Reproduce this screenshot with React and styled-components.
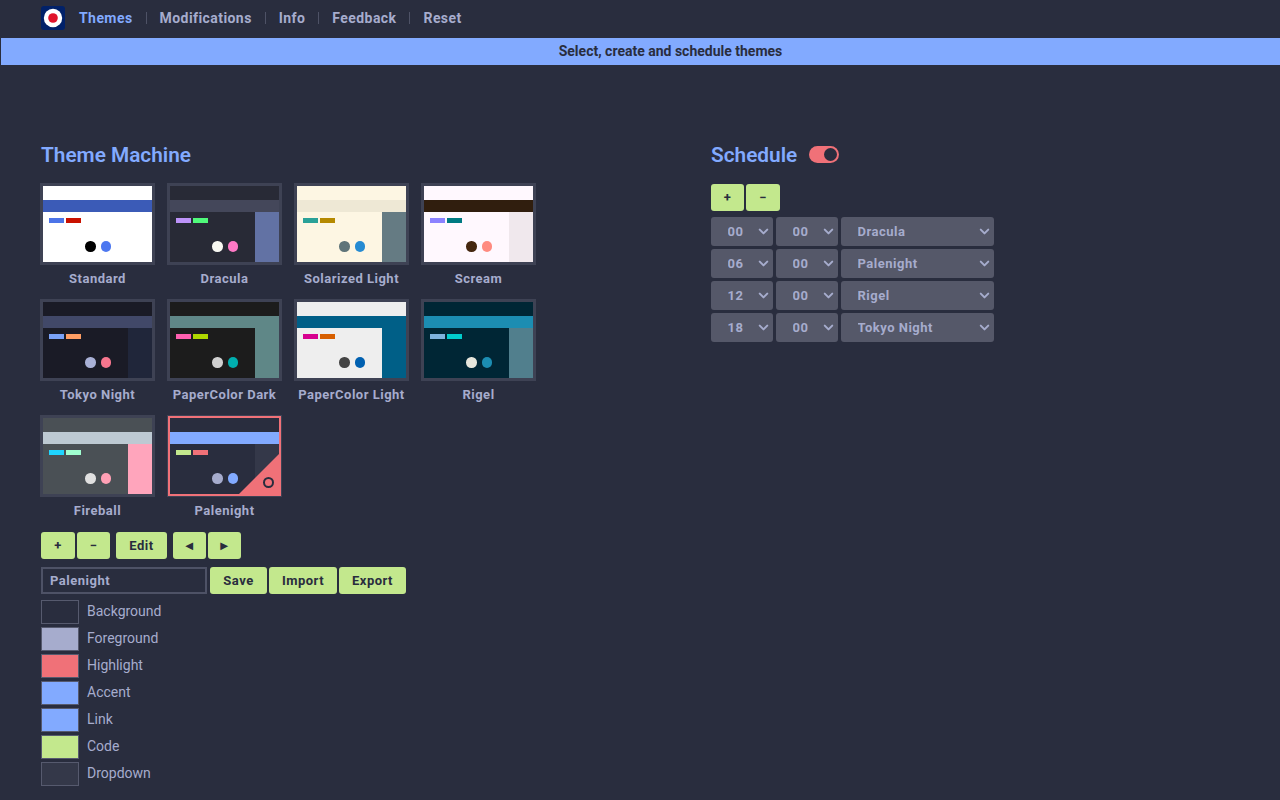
import React, { useState } from "react";
import styled, { createGlobalStyle } from "styled-components";
import { ChevronDown } from "lucide-react";

const bg = "#292d3e";
const fg = "#a6accd";
const accent = "#82aaff";
const highlight = "#f07178";
const code = "#c3e88d";
const border = "#3e4254";

const themes = [
  { name: "Standard", bg: "#ffffff", bar: "#3b5bb7", side: "#ffffff", chips: ["#4c74e8", "#c91100"], dots: ["#000000", "#4d78f0"] },
  { name: "Dracula", bg: "#282a36", bar: "#44475a", side: "#6272a4", chips: ["#bd93f9", "#50fa7b"], dots: ["#f8f8f2", "#ff79c6"] },
  { name: "Solarized Light", bg: "#fdf6e3", bar: "#eee8d5", side: "#657b83", chips: ["#2aa198", "#b58900"], dots: ["#5f7479", "#268bd2"] },
  { name: "Scream", bg: "#fff8fe", bar: "#301e0e", side: "#f0e8ed", chips: ["#8c82ff", "#007a82"], dots: ["#45270f", "#ff8b80"] },
  { name: "Tokyo Night", bg: "#1a1b26", bar: "#414868", side: "#20263a", chips: ["#7aa2f7", "#ff9e64"], dots: ["#a9b1d6", "#f7768e"] },
  { name: "PaperColor Dark", bg: "#1c1c1c", bar: "#5f8787", side: "#5f8787", chips: ["#ff5faf", "#afd700"], dots: ["#d0d0d0", "#00afaf"] },
  { name: "PaperColor Light", bg: "#eeeeee", bar: "#005f87", side: "#005f87", chips: ["#d7008f", "#d75f00"], dots: ["#444444", "#0060b0"] },
  { name: "Rigel", bg: "#002635", bar: "#1c8db2", side: "#517f8d", chips: ["#7eb2dd", "#00cccc"], dots: ["#e6e6dc", "#1c8db2"] },
  { name: "Fireball", bg: "#4a5055", bar: "#bdc9d2", side: "#ffa5bc", chips: ["#1fd5ff", "#a0ffd0"], dots: ["#e0e0e0", "#ffa0b5"] },
  { name: "Palenight", bg: bg, bar: accent, side: "#343849", chips: [code, "#f07178"], dots: [fg, accent] },
];

const colours = [
  ["Background", bg],
  ["Foreground", fg],
  ["Highlight", highlight],
  ["Accent", accent],
  ["Link", accent],
  ["Code", code],
  ["Dropdown", "#343849"],
];

const schedule = [
  ["00", "00", "Dracula"],
  ["06", "00", "Palenight"],
  ["12", "00", "Rigel"],
  ["18", "00", "Tokyo Night"],
];

const navItems = ["Themes", "Modifications", "Info", "Feedback", "Reset"];

const Dropdown = ({ value, options, wide }) => (
  <SelectWrap $wide={wide}>
    <Select defaultValue={value}>
      {options.map((o) => (
        <option key={o}>{o}</option>
      ))}
    </Select>
    <SelectArrow size={15} strokeWidth={3.2} />
  </SelectWrap>
);

const App = () => {
  const [active, setActive] = useState("Palenight");
  const [enabled, setEnabled] = useState(true);

  return (
    <Page>
      <GlobalStyle />
      <Nav>
        <svg width="24" height="24" viewBox="0 0 24 24">
          <rect width="24" height="24" rx="3" fill="#012169" />
          <circle cx="12" cy="12" r="9.2" fill="#ffffff" />
          <circle cx="12" cy="12" r="4.8" fill="#e0142c" />
        </svg>
        <NavList>
          {navItems.map((item) => (
            <NavItem key={item} $current={item === "Themes"}>
              {item}
            </NavItem>
          ))}
        </NavList>
      </Nav>
      <Banner>Select, create and schedule themes</Banner>

      <Columns>
        <section>
          <Title>Theme Machine</Title>
          <ThemeGrid>
            {themes.map((t) => (
              <ThemeCard key={t.name} onClick={() => setActive(t.name)}>
                <Preview $selected={active === t.name}>
                  <PreviewTop $color={t.bg} />
                  <PreviewBar $color={t.bar} />
                  <PreviewBody $color={t.bg}>
                    <PreviewMain>
                      <Chips>
                        {t.chips.map((c) => (
                          <Chip key={c} $color={c} />
                        ))}
                      </Chips>
                      <Dots>
                        {t.dots.map((c) => (
                          <Dot key={c} $color={c} />
                        ))}
                      </Dots>
                    </PreviewMain>
                    <PreviewSide $color={t.side} />
                  </PreviewBody>
                  {active === t.name && (
                    <Corner>
                      <CornerRing />
                    </Corner>
                  )}
                </Preview>
                <ThemeName>{t.name}</ThemeName>
              </ThemeCard>
            ))}
          </ThemeGrid>

          <ButtonRow>
            <Button $w={34}>+</Button>
            <Button $w={33}>−</Button>
            <Button $w={51} $gapLeft={4}>
              Edit
            </Button>
            <Button $w={33} $gapLeft={4}>
              ◄
            </Button>
            <Button $w={33}>►</Button>
          </ButtonRow>

          <SaveRow>
            <NameInput defaultValue="Palenight" />
            <Button $w={57} $gapLeft={1}>
              Save
            </Button>
            <Button $w={68}>Import</Button>
            <Button $w={67}>Export</Button>
          </SaveRow>

          <ColourList>
            {colours.map(([label, colour]) => (
              <ColourRow key={label}>
                <Swatch $color={colour} />
                <ColourLabel>{label}</ColourLabel>
              </ColourRow>
            ))}
          </ColourList>
        </section>

        <section>
          <ScheduleHead>
            <Title>Schedule</Title>
            <Toggle $on={enabled} onClick={() => setEnabled(!enabled)} />
          </ScheduleHead>
          <ScheduleButtons>
            <Button $w={33}>+</Button>
            <Button $w={34}>−</Button>
          </ScheduleButtons>
          <ScheduleList>
            {schedule.map(([h, m, name]) => (
              <ScheduleRow key={h}>
                <Dropdown value={h} options={[h]} />
                <Dropdown value={m} options={[m]} />
                <Dropdown value={name} options={themes.map((t) => t.name)} wide />
              </ScheduleRow>
            ))}
          </ScheduleList>
        </section>
      </Columns>
    </Page>
  );
};

export default App;

const GlobalStyle = createGlobalStyle`
  html, body {
    margin: 0;
    background: ${bg};
  }
  body {
    font-family: Roboto, sans-serif;
    color: ${fg};
  }
`;

const Page = styled.div`
  min-height: 800px;
  padding-left: 1px;
  box-sizing: border-box;
`;

const Nav = styled.nav`
  display: flex;
  align-items: center;
  height: 38px;
  padding: 0 0 2px 40px;
  box-sizing: border-box;
`;

const NavList = styled.ul`
  display: flex;
  list-style: none;
  margin: 0 0 0 14px;
  padding: 0;
`;

const NavItem = styled.li`
  font-size: 14px;
  font-weight: 700;
  letter-spacing: 0.43px;
  line-height: 12px;
  color: ${(p) => (p.$current ? accent : fg)};
  padding: 0 13px;
  border-left: 1px solid #4e5266;

  &:first-child {
    border-left: none;
    padding-left: 0;
  }
`;

const Banner = styled.div`
  height: 27px;
  line-height: 27px;
  padding-left: 60px;
  background: ${accent};
  color: ${bg};
  text-align: center;
  font-size: 14px;
  font-weight: 700;
`;

const Columns = styled.main`
  display: grid;
  grid-template-columns: 670px 1fr;
  padding: 76px 0 0 40px;
`;

const Title = styled.h2`
  margin: 0;
  font-size: 20.8px;
  line-height: 28px;
  font-weight: 600;
  color: ${accent};
`;

const ThemeGrid = styled.div`
  display: grid;
  grid-template-columns: repeat(4, 115px);
  column-gap: 12px;
  row-gap: 10px;
  margin: 14px 0 0 -1px;
`;

const ThemeCard = styled.div`
  cursor: pointer;
`;

const Preview = styled.div`
  position: relative;
  display: flex;
  flex-direction: column;
  height: 82px;
  box-sizing: border-box;
  border: 3px solid ${(p) => (p.$selected ? highlight : border)};
  outline: 1px solid ${border};
  outline-offset: -1px;
  overflow: hidden;
`;

const PreviewTop = styled.div`
  height: 14px;
  background: ${(p) => p.$color};
`;

const PreviewBar = styled.div`
  height: 12px;
  background: ${(p) => p.$color};
`;

const PreviewBody = styled.div`
  display: flex;
  flex: 1;
  background: ${(p) => p.$color};
`;

const PreviewMain = styled.div`
  flex: 1;
  padding: 6px 0 0 6px;
`;

const PreviewSide = styled.div`
  width: 24px;
  background: ${(p) => p.$color};
`;

const Chips = styled.div`
  display: flex;
  gap: 2px;
`;

const Chip = styled.span`
  width: 15px;
  height: 5px;
  background: ${(p) => p.$color};
`;

const Dots = styled.div`
  display: flex;
  gap: 5px;
  margin: 18px 0 0 36px;
`;

const Dot = styled.span`
  width: 10.5px;
  height: 10.5px;
  border-radius: 50%;
  background: ${(p) => p.$color};
`;

const Corner = styled.div`
  position: absolute;
  right: 0;
  bottom: 0;
  width: 40px;
  height: 40px;
  background: ${highlight};
  clip-path: polygon(100% 0, 100% 100%, 0 100%);
`;

const CornerRing = styled.span`
  position: absolute;
  right: 5px;
  bottom: 6px;
  width: 11px;
  height: 11px;
  box-sizing: border-box;
  border: 2.5px solid ${bg};
  border-radius: 50%;
`;

const ThemeName = styled.div`
  margin-top: 6px;
  height: 18px;
  line-height: 16px;
  text-align: center;
  font-size: 13px;
  font-weight: 700;
  letter-spacing: 0.5px;
`;

const ButtonRow = styled.div`
  display: flex;
  gap: 2px;
  margin-top: 11px;
`;

const Button = styled.button`
  width: ${(p) => p.$w}px;
  height: 27px;
  margin-left: ${(p) => p.$gapLeft || 0}px;
  padding: 0;
  border: none;
  border-radius: 3px;
  background: ${code};
  color: ${bg};
  font-family: Roboto, sans-serif;
  font-size: 13px;
  font-weight: 700;
  letter-spacing: 0.5px;
  cursor: pointer;
`;

const SaveRow = styled.div`
  display: flex;
  gap: 2px;
  margin-top: 8px;
`;

const NameInput = styled.input`
  width: 166px;
  height: 27px;
  box-sizing: border-box;
  padding: 0 7px;
  border: 2px solid #4e5266;
  background: transparent;
  color: ${fg};
  font-family: Roboto, sans-serif;
  font-size: 13px;
  font-weight: 700;
  letter-spacing: 0.5px;
  outline: none;
`;

const ColourList = styled.div`
  display: flex;
  flex-direction: column;
  gap: 3px;
  margin-top: 6px;
`;

const ColourRow = styled.div`
  display: flex;
  align-items: center;
  gap: 8px;
  font-size: 14px;
  height: 24px;
`;

const ColourLabel = styled.span`
  padding-bottom: 2px;
`;

const Swatch = styled.span`
  width: 38px;
  height: 24px;
  box-sizing: border-box;
  border: 1px solid #565a6e;
  background: ${(p) => p.$color};
`;

const ScheduleHead = styled.div`
  display: flex;
  align-items: center;
  gap: 12px;
`;

const Toggle = styled.button`
  position: relative;
  width: 30px;
  height: 17px;
  margin-bottom: 1px;
  padding: 0;
  border: none;
  border-radius: 9px;
  background: ${highlight};
  cursor: pointer;

  &::after {
    content: "";
    position: absolute;
    top: 2px;
    left: ${(p) => (p.$on ? 14.5 : 2)}px;
    width: 13px;
    height: 13px;
    border-radius: 50%;
    background: ${bg};
  }
`;

const ScheduleButtons = styled.div`
  display: flex;
  gap: 2px;
  margin-top: 15px;
`;

const ScheduleList = styled.div`
  display: flex;
  flex-direction: column;
  gap: 3px;
  margin-top: 6px;
`;

const ScheduleRow = styled.div`
  display: flex;
  gap: 3px;
`;

const SelectWrap = styled.div`
  position: relative;
  width: ${(p) => (p.$wide ? 153 : 62)}px;
  height: 29px;
`;

const Select = styled.select`
  appearance: none;
  width: 100%;
  height: 100%;
  padding: 0 0 0 16.5px;
  border: none;
  border-radius: 3px;
  background-color: #555869;
  color: ${fg};
  font-family: Roboto, sans-serif;
  font-size: 13px;
  font-weight: 700;
  letter-spacing: 0.5px;
`;

const SelectArrow = styled(ChevronDown)`
  position: absolute;
  top: 6.5px;
  right: 2.5px;
  color: ${fg};
  pointer-events: none;
`;
